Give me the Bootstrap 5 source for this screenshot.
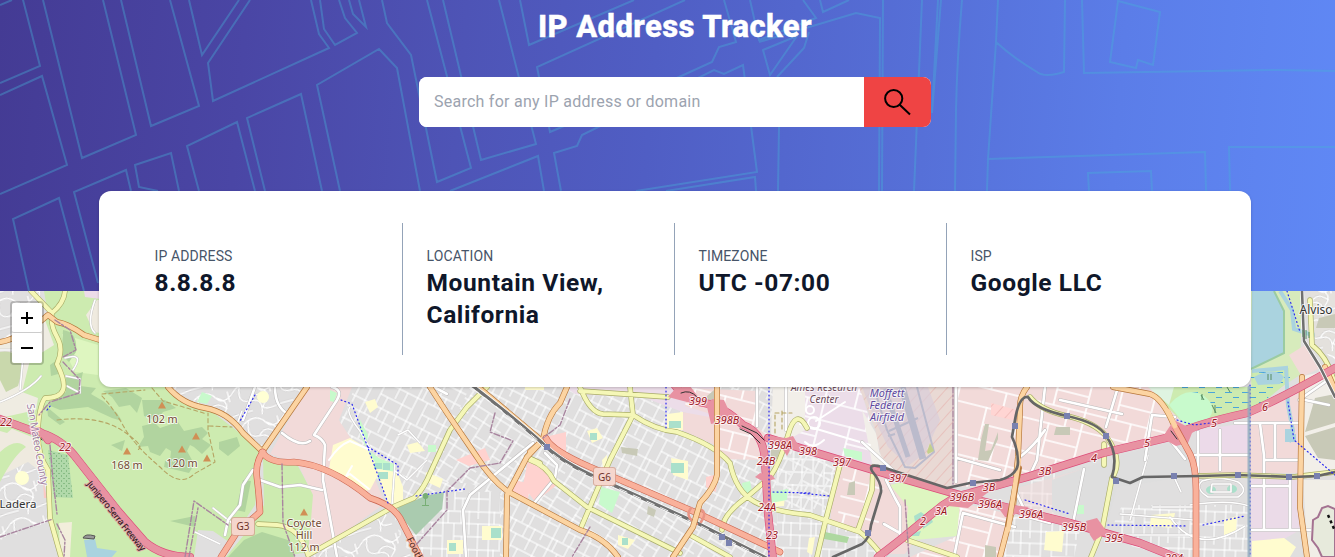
<!DOCTYPE html>
<html lang="en">
<head>
<meta charset="utf-8">
<meta name="viewport" content="width=device-width, initial-scale=1">
<title>IP Address Tracker</title>
<link rel="stylesheet" href="https://cdn.jsdelivr.net/npm/bootstrap@5.3.0/dist/css/bootstrap.min.css">
<style>
html{overflow:hidden}
body{width:1350px;height:557px;overflow:hidden;font-family:Roboto,"Liberation Sans",sans-serif;color:#0f172a}
.hero{height:291px;padding-top:9px;background:linear-gradient(95deg,#443b94 0%,#4a46a5 18%,#4e54b6 34%,#505ec4 48%,#5670d8 68%,#5b7de8 82%,#6089f6 100%)}
.hero-art{inset:0;width:1335px;height:291px}
.hero-art path{fill:none;stroke:#46b0d8;stroke-opacity:.38;stroke-width:2}
.hero h1{font-size:31px;line-height:36px;font-weight:800;letter-spacing:.42px;margin:0 0 32px;-webkit-text-stroke:.4px #fff}
.search-box{width:512px;height:50px;border-radius:8px}
.search-box input{border:0;border-radius:8px 0 0 8px;padding:0 15px;font-size:16px;letter-spacing:.25px;color:#111827}
.search-box input::placeholder{color:#9ca3af;opacity:1}
.search-box button{width:67px;border:0;border-radius:0 8px 8px 0;background:#ef4444;color:#000;padding:0 2px 1px 0}
.info-panel{z-index:5;width:1152px;height:196px;margin-top:-100px;padding:32px;border-radius:12px;box-shadow:0 1px 3px #0003}
.info-item{width:272px;padding:24px 24px 24px 23.5px;border-right:1px solid #94a3b8}
.info-item:last-child{border:0}
.info-label{font-size:14px;line-height:20px;color:#475569;letter-spacing:.12px;margin-top:-1px;margin-bottom:1px}
.info-value{font-size:24.5px;line-height:32px;font-weight:700;letter-spacing:.6px}
.map-pane{height:266px;margin-top:-96px;width:1335px}
.map-zoom{left:10px;top:10px;width:34px;height:64px;border:2px solid #0003;border-radius:4px;background-clip:padding-box;z-index:3}
.map-zoom button{height:30px;border:0;background:#fff;padding:0;border-radius:2px;line-height:0}
.map-zoom button:first-child{border-bottom:1px solid #ccc}
.ln path{fill:none;stroke-linecap:round;stroke-linejoin:round}
.case-y{stroke:#a9ad68;stroke-width:5.4}.fill-y{stroke:#f5f7b7;stroke-width:4.1}
.case-o{stroke:#b6763a;stroke-width:5.9}.fill-o{stroke:#fcd4a2;stroke-width:4.6}
.case-s{stroke:#cb6650;stroke-width:6.6}.fill-s{stroke:#f9b19b;stroke-width:5.4}
.case-m{stroke:#dc4b78;stroke-width:8.2}.fill-m{stroke:#e892a2;stroke-width:7}
.case-w{stroke:#bdbbbb;stroke-width:3.6}.fill-w{stroke:#fff;stroke-width:2.6}
.case-t{stroke:#c4c2c2;stroke-width:2.4}.fill-t{stroke:#fff;stroke-width:1.6}
.map-text{font-family:"Noto Sans","DejaVu Sans",sans-serif;font-size:10.8px;text-anchor:middle;paint-order:stroke;stroke:#fff;stroke-width:2px;stroke-opacity:.75;stroke-linejoin:round}
.exits{font-style:italic;fill:#9c1522}
</style>
</head>
<body>
<header class="hero position-relative">
  <svg class="hero-art position-absolute" viewBox="0 0 1335 291" aria-hidden="true">
    <path d="M0 5L12 0M22-4L40 66L0 83M0 95L42 76L67 165L0 194M43 0L82 158L136 135L103 0M121 0L151 126L199 106L170 0M189 0L202 55L239 0M250 0L208 63L213 101L329 48L319 34L311 0M320 0L324 29L335 45L357 33L345 18L339 0M349 0L353 14L366 27L359 0M382 0L387 23L411 55L437 182L471 168L427 0M443 0L481 160L536 144L499 0M520 0L529 45L634 0M685 0L537 67L550 132L679 77L712 62L719 47L736 42L724 0M561 191L554 153L577 146L582 135L714 70L724 74L743 65L757 172L636 191M450 191L538 156L544 191M666 191L755 177L756 191M750 0L759 40L816 18L803 0M820 0L823 12L849 0M763 50L770 75L797 36ZM777 77L804 48L809 32M759 42L856 13L880 18L879 191M883 0L882 191M779 127L778 191M922 0L914 191M938 0L932 113L941 0M962 0Q957 60 956 110L955 191M998 0L996 42L988 159L987 191M996 42Q1012 57 1037 72Q1045 78 1064 72L1065 0M1082 0L1084 73L1277 70L1335 71M1118 1L1160 12L1153 65L1138 60L1136 68L1110 62ZM988 159L1205 152L1206 191M1089 191L1088 173L1151 171L1152 191M1230 191L1229 147H1335M29 291L13 219L59 198L84 291M98 283L74 192L126 170L131 191M158 191L139 187L135 165L171 153L179 191M199 191L187 146L237 122L255 191M265 191L247 118L301 94L322 191M340 191L317 85L379 49L397 68L420 191"/>
  </svg>
  <h1 class="position-relative text-center text-white">IP Address Tracker</h1>
  <form class="search-box position-relative d-flex mx-auto bg-white" onsubmit="return false">
    <input class="flex-grow-1" type="text" placeholder="Search for any IP address or domain" aria-label="IP address or domain">
    <button class="d-flex align-items-center justify-content-center" type="submit" aria-label="Search">
      <svg width="30" height="30" viewBox="0 0 30 30" fill="none" stroke="currentColor" stroke-width="2"><circle cx="11.7" cy="11.5" r="8.6"/><path d="M17.7 17.7L28 27.5"/></svg>
    </button>
  </form>
</header>

<section class="info-panel position-relative d-flex mx-auto bg-white">
  <div class="info-item"><div class="info-label">IP ADDRESS</div><div class="info-value">8.8.8.8</div></div>
  <div class="info-item"><div class="info-label">LOCATION</div><div class="info-value">Mountain View, California</div></div>
  <div class="info-item"><div class="info-label">TIMEZONE</div><div class="info-value">UTC -07:00</div></div>
  <div class="info-item"><div class="info-label">ISP</div><div class="info-value">Google LLC</div></div>
</section>

<main class="map-pane position-relative overflow-hidden">
  <div class="map-zoom position-absolute d-flex flex-column">
    <button type="button" aria-label="Zoom in"><svg width="14" height="14" viewBox="0 0 14 14" stroke="#000" stroke-width="2"><path d="M7 1V13M1 7H13"/></svg></button>
    <button type="button" aria-label="Zoom out"><svg width="14" height="14" viewBox="0 0 14 14" stroke="#000" stroke-width="2"><path d="M1 7H13"/></svg></button>
  </div>
  <svg class="d-block" width="1335" height="266" viewBox="0 291 1335 266">
    <defs>
      <pattern id="gridA" width="46" height="38" patternUnits="userSpaceOnUse" patternTransform="rotate(27)">
        <path d="M0 1H46M1 0V38M0 13H27M27 0V24M12 13V38M12 26H46M36 13V38M27 13H46M20 26V38M6 0V13M19 0V13M36 1V8" fill="none" stroke="#c9c7c7" stroke-width="2.2"/>
        <path d="M0 1H46M1 0V38M0 13H27M27 0V24M12 13V38M12 26H46M36 13V38M27 13H46M20 26V38M6 0V13M19 0V13M36 1V8" fill="none" stroke="#fff" stroke-width="1.5"/>
      </pattern>
      <pattern id="gridB" href="#gridA" patternTransform="rotate(-58)"/>
      <pattern id="gridC" href="#gridA" patternTransform="rotate(2)"/>
      <pattern id="gridD" width="64" height="52" patternUnits="userSpaceOnUse" patternTransform="rotate(14)"><path d="M0 1H64M1 0V52M32 0V34M0 34H64M48 34V52M32 18H64" fill="none" stroke="#fff" stroke-width="1.7"/></pattern>
      <pattern id="loops" width="42" height="36" patternUnits="userSpaceOnUse" patternTransform="rotate(-15)"><path d="M0 5Q14-3 21 8T42 5M5 3Q-2 20 12 20T20 36M21 8Q36 16 26 25T42 30M12 20Q20 10 30 22M0 30H12M34 5V16" fill="none" stroke="#c9c7c7" stroke-width="2.3"/><path d="M0 5Q14-3 21 8T42 5M5 3Q-2 20 12 20T20 36M21 8Q36 16 26 25T42 30M12 20Q20 10 30 22M0 30H12M34 5V16" fill="none" stroke="#fff" stroke-width="1.6"/></pattern>
      <pattern id="marsh" width="17" height="10" patternUnits="userSpaceOnUse"><path d="M1 2.500H8M9 7.500H15" stroke="#4aa5da" stroke-width="1.1"/></pattern>
      <pattern id="hatch" width="9" height="9" patternUnits="userSpaceOnUse" patternTransform="rotate(42)"><path d="M0 0V9" stroke="#e6aaa6" stroke-width="1"/></pattern>
      <pattern id="dots" width="5" height="5" patternUnits="userSpaceOnUse"><path d="M1 1h1M3.500 3.500h1" stroke="#5e9f60"/></pattern>
      <path id="peak" d="M0-3.500L4 3.500H-4Z" fill="#d08f55"/>
      <rect id="stop" x="-3" y="-3" width="6" height="6" fill="#7981b0"/>
    </defs>
    <rect y="291" width="1335" height="266" fill="#e0dfdf"/>

    <!-- hills and open space -->
    <path d="M0 291H100L180 387L262 450L255 505L220 557H0Z" fill="#cdebb0"/>
    <path d="M0 291H44L48 315L20 340L0 345Z" fill="#e0dfdf"/>
    <path d="M0 291H44L48 315L20 340L0 345Z" fill="url(#loops)"/>
    <path d="M0 344L20 338L45 320L54 345L30 360L22 392L38 398L36 410L0 418Z" fill="#efece2"/>
    <path d="M0 352Q18 349 23 368L18 386L6 392L0 380Z" fill="#c9d8ac"/>
    <path d="M0 424L32 437L44 470L20 482L0 475Z" fill="#efeadf"/>
    <path d="M0 476L28 462L46 476L50 521L60 557H0Z" fill="#e0dfdf"/>
    <path d="M0 476L28 462L46 476L50 521L20 533L0 540Z" fill="url(#loops)"/>
    <path d="M0 452Q16 437 26 447Q14 455 0 482ZM0 416L22 420L7 433L0 431Z" fill="#cdebb0"/>
    <path d="M62 334L98 345V375L75 372L65 352Z" fill="#def6c0"/>
    <path d="M63 330Q78 332 76 352L69 362L62 355ZM50 365L57 360L58 374L51 376ZM66 378L83 372L80 386L96 388L91 394L103 401L117 413L122 421L112 418L88 407L60 410L48 405L58 397L66 392ZM103 391L126 388L142 398L137 413L130 405L119 407L112 397ZM142 426L155 423L160 428L178 422L184 431L202 427L208 433L202 439L211 445L202 454L194 447L190 445L187 451L192 460L188 466L170 461L171 451L166 448L160 456L150 452L148 446L138 447L144 437ZM111 445L125 440L122 451ZM165 461L194 465L189 473L164 467ZM219 442L237 437L240 446L228 456L219 449ZM170 521L195 516V527ZM47 407L65 422L60 425L48 416ZM142 400L165 400L176 408L163 412L156 421L144 416ZM243 480L251 481L245 512L236 510Z" fill="#b1d49f"/>
    <path d="M48 450L68 455L73 498L54 497Z" fill="#b1d9aa"/><path d="M48 450L68 455L73 498L54 497Z" fill="url(#dots)"/>
    <path d="M84 291H100V299L85 297Z" fill="#eddce9"/>
    <path d="M97 300L86 315L94 332L100 333V300Z" fill="#efeadf"/>
    <path d="M59 523L72 522L70 557H60Z" fill="#f2eedb"/>
    <path d="M84 540L95 539L97 548L117 551L112 557H87Z" fill="#aad3df"/><path d="M83 538Q85 533 95 536L94 539Z" fill="#999" stroke="#555"/>
    <path d="M194 557L198 530L213 531L232 544L224 557Z" fill="#e0dfdf"/>
    <circle cx="22" cy="478" r="7" fill="#ffffd4"/><path d="M43 480L47 498H44Z" fill="#fbc9c4"/>
    <path d="M168 387H306L266 450L216 413L190 402Z" fill="#e0dfdf"/><path d="M168 387H306L266 450L216 413L190 402Z" fill="url(#loops)"/>
    <path d="M202 392L212 396L207 404L197 402Z" fill="#c8facc"/><circle cx="263" cy="397" r="6" fill="#ffffd4"/>
    <path d="M263 457L283 462L298 466L308 485L316 497L312 524L308 552L280 557H226L248 530L264 505Z" fill="#cdebb0"/>
    <path d="M262 532L288 540L295 557H228L244 540Z" fill="#b1d49f"/>

    <!-- neighbourhoods -->
    <path d="M307 387H352L339 420L371 470L385 503L340 536L308 557L313 495L298 464L270 454Z" fill="#f2dad9"/>
    <path d="M355 387H840V557H405L393 510L370 466L340 422Z" fill="url(#gridA)"/>
    <path d="M470 387L540 440L600 475L760 557H620L500 486L425 480Z" fill="#e0dfdf"/><path d="M470 387L540 440L600 475L760 557H620L500 486L425 480Z" fill="url(#gridB)"/>
    <path d="M425 492H500V557H405L397 508Z" fill="#e0dfdf"/><path d="M425 492H500V557H405L397 508Z" fill="url(#gridC)"/>
    <path d="M308 553L385 512L412 557H310Z" fill="#e0dfdf"/><path d="M308 553L385 512L412 557H310Z" fill="url(#loops)"/>
    <path d="M565 387H720L710 420L680 411L645 398L575 394Z" fill="#ecdde9"/>
    <path d="M688 388L757 391V426L768 437L764 460L720 459L717 416L685 406Z" fill="#f2dad9"/><path d="M688 388L757 391V426L768 437L764 460L720 459L717 416L685 406Z" fill="url(#gridD)"/>
    <path d="M682 412L715 418V445L677 428Z" fill="#f2dad9"/>
    <path d="M528 460L545 468L558 484L535 502L523 485ZM515 480L530 484L528 500L507 492ZM456 460L485 448L490 460L469 466ZM545 437L566 432V455ZM706 477L718 474L716 492L706 487Z" fill="#ffd2cf"/>
    <path d="M773 387H860L880 455L872 466L775 439Z" fill="#ecdde9"/><path d="M773 387H860L880 455L872 466L775 439Z" fill="url(#gridD)"/>
    <path d="M773 387H805V430L780 445L771 434Z" fill="#f2efe9"/>
    <path d="M862 410L877 435L879 452L897 474L872 463Z" fill="#f2efe9"/>
    <path d="M859 387H956L952 490L899 475L881 456L875 429Z" fill="#e9d9d4"/><path d="M859 387H955L952 490L899 475L881 456L875 429Z" fill="url(#hatch)"/>
    <path d="M862 387H928L940 420L925 453L908 466L888 447L875 420Z" fill="#d8cdda" opacity=".7"/>
    <path d="M836 457L886 476L876 535L830 523ZM876 482L950 491L905 554H860L872 510Z" fill="#f2dad9"/>
    <path d="M845 462L885 477L877 535L837 522Z" fill="url(#gridD)"/><path d="M775 445L838 461L824 523L776 508Z" fill="url(#gridC)"/>
    <path d="M778 510L822 523L815 557H774ZM824 525L868 536L880 557H817Z" fill="#e0dfdf"/><path d="M778 510L868 536L880 557H774Z" fill="url(#gridC)"/>
    <path d="M903 482L971 499L957 536L905 541L908 507L890 485Z" fill="#def6c0"/>
    <path d="M957 387H1190L1170 439L1070 464L985 486L954 487Z" fill="#f2dad9"/><path d="M957 387H1190L1170 439L1070 464L985 486L954 487Z" fill="url(#gridD)"/>
    <path d="M960 503L1010 514L998 557H910L957 536Z" fill="#f2dad9"/><path d="M960 503L1010 514L998 557H910L957 536Z" fill="url(#gridD)"/>
    <path d="M1012 512L1080 530L1074 557H1000Z" fill="#e0dfdf"/><path d="M1019 485L1064 470L1055 517L1019 508ZM1012 512L1080 530L1074 557H1000Z" fill="url(#gridC)"/>
    <path d="M1020 487L1110 461L1105 530L1018 508Z" fill="#f2dad9" opacity=".5"/>
    <path d="M1052 480L1122 455L1180 440L1193 462V475L1117 488L1105 530L1052 512Z" fill="#dedede"/>
    <path d="M1120 486H1248V557H1108Z" fill="#e0dfdf"/><path d="M1122 505H1248V557H1170L1107 539Z" fill="url(#gridC)"/>
    <path d="M1196 430L1248 423V472H1198Z" fill="#ecdae9"/><path d="M1198 455H1248V473H1198Z" fill="#f2dad9"/>
    <path d="M1250 410L1300 391V473H1250Z" fill="#f2dad9"/>
    <path d="M1250 478H1300V530L1252 557Z" fill="#ebdbe8"/>
    <path d="M1303 376L1335 369V474H1303Z" fill="#f2efe9"/>
    <path d="M1303 480H1335V557H1308Z" fill="#f1eee7"/>
    <path d="M1315 398L1335 394V423L1305 432ZM1305 436L1335 427V460L1318 458Z" fill="#c8c9b7"/>
    <path d="M1251 291H1302L1300 375L1251 407Z" fill="#d7ebbc"/>
    <path d="M1252 291H1274L1284 311V353L1251 369Z" fill="#aad3df"/>
    <path d="M1274 291L1284 311V353L1251 369" fill="none" stroke="#9bcba1" stroke-width="2"/>
    <path d="M1150 387L1252 387V370L1289 368V381L1253 411L1200 427H1188L1168 408Z" fill="#cdebb0"/>
    <path d="M1162 387H1251V371L1290 369V382L1252 409L1208 411L1195 395Z" fill="url(#marsh)"/>
    <path d="M1169 405Q1185 386 1203 395Q1223 410 1201 425H1185Z" fill="#c8facc"/>
    <path d="M1148 387H1174L1169 405Z" fill="#dff4e1"/>
    <path d="M1254 377Q1275 366 1284 377L1280 384L1258 385Z" fill="#aad3df"/>
    <path d="M1280 291L1292 310L1294 329L1312 335L1335 332M1252 371L1286 368L1288 405L1293 431L1289 442" fill="none" stroke="#aad3df" stroke-width="4"/>
    <path d="M1289 355L1305 345L1320 368L1302 377Z" fill="#f2dad9"/><path d="M1310 291H1335V360L1316 347Z" fill="#e4e1dd"/><path d="M1310 291H1335V360L1316 347Z" fill="url(#loops)"/>
    <path d="M1319 318L1335 314V328H1316Z" fill="#c8c9b7"/>

    <!-- parks and schools -->
    <path d="M333 445L350 438L367 448L378 475L370 490L358 492L329 469ZM369 452L395 466L403 487V504L388 503ZM365 402L375 399L378 407L370 413ZM407 445L418 442L425 451L410 453ZM426 472L443 479L440 488L425 481ZM482 526H502V540H482ZM447 540H463V554H447ZM587 431L597 428L603 438L592 443ZM671 458L688 461V480L673 475ZM667 414L683 412V430H667ZM618 535L635 540L628 549L618 545ZM525 382H544V390H525ZM1151 515L1175 513L1172 528L1150 526ZM1224 520L1237 516L1236 533L1224 535ZM1252 541L1284 538L1296 547L1290 557H1252ZM1046 532L1064 531L1062 552L1044 550ZM770 498L785 496L784 506L771 507ZM809 538L815 537L812 555L807 552ZM602 460L607 455L608 468L603 468Z" fill="#fffccf"/>
    <path d="M397 508L425 496L444 492L442 509L416 535L404 520Z" fill="#aacbaf"/>
    <path d="M359 418L368 435L366 447L360 435ZM367 449L379 458L396 465V472L379 469ZM330 390L337 393L334 402L330 401ZM601 487L620 492L612 513L599 504ZM742 483L750 481L753 496L743 492ZM770 492L788 489L787 500L771 503ZM428 445H436V452H428ZM843 448L862 452V461L845 456ZM1075 505H1084V514H1075Z" fill="#c8facc"/>
    <path d="M825 532L849 537L847 543L824 539Z" fill="#aed8a0"/>
    <path d="M374 463h8v6h-8ZM383 463h7v7h-7ZM378 472h10v7h-10ZM671 463h13v10h-13ZM669 421h12v7h-12ZM590 433h7v7h-7ZM491 528h10v10h-10ZM449 543h7v8h-7ZM622 538h6v7h-6ZM914 516l7-4 4 3-10 7ZM912 533l9-2-2 5h-7ZM923 522l8-4 2 4-10 7ZM1206 490a5 4 0 1 0 10 0a5 4 0 1 0-10 0M1227 489a5 4 0 1 0 10 0a5 4 0 1 0-10 0" fill="#aae0cb"/>
    <path d="M981 440L985 424H989L985 451L991 450L998 432V439L988 461L978 460ZM849 483L855 481V495H847ZM707 396L714 390V402L708 405ZM1056 427H1070V435H1054ZM985 545L996 547V557H985ZM771 449L780 450L777 459L771 458ZM621 447L638 449L637 456L622 453ZM648 506L656 510L654 517L647 514Z" fill="#c8c9b7"/>
    <path d="M991 403L1017 410V421L991 415Z" fill="#ffd5d3"/><path d="M991 403L1017 410V421L991 415Z" fill="url(#hatch)"/>
    <path d="M1285 429h7v5h4v8h-11Z" fill="#aad3df"/>
    <path d="M1313 520L1318 517L1322 508L1328 506L1335 509V557H1322L1318 548L1312 540Z" fill="#e7eadc" stroke="#a47291" stroke-width="2"/>
    <path d="M1328 515L1335 531" stroke="#111" stroke-width="2.500" stroke-dasharray="3 3"/>

    <!-- runways -->
    <g fill="none" stroke="#bbbbcc"><path d="M885 389L908 457" stroke-width="5"/><path d="M902 387L923 459" stroke-width="7"/><path d="M875 391L887 430L905 467L915 468L934 452L917 387M888 436L895 434M889 431L918 418" stroke-width="2"/></g>
    <path d="M927 452L930 443L934 451L928 454Z" fill="#c3d08c"/>

    <g class="ln">
      <path class="case-t" d="M0 402Q30 390 41 376M24 346L20 390M0 350H26M95 300Q86 325 95 333M65 358Q85 352 73 370M66 376L80 379V393L67 386M195 532L220 544M213 508L232 523M242 411L237 424M395 463L392 505M350 407Q345 412 360 431L371 450M427 460L407 480L395 471M420 443L408 430L398 435M1190 505Q1230 499 1249 506M1202 481Q1219 475 1238 482Q1249 490 1238 497H1208Q1194 488 1202 481M1212 484H1231V492H1211ZM1170 517Q1197 557 1245 526M1152 507H1198M1120 514L1193 520M1193 535H1115M1148 455L1130 520M1174 477L1181 492"/><path class="fill-t" d="M0 402Q30 390 41 376M24 346L20 390M0 350H26M95 300Q86 325 95 333M65 358Q85 352 73 370M66 376L80 379V393L67 386M195 532L220 544M213 508L232 523M242 411L237 424M395 463L392 505M350 407Q345 412 360 431L371 450M427 460L407 480L395 471M420 443L408 430L398 435M1190 505Q1230 499 1249 506M1202 481Q1219 475 1238 482Q1249 490 1238 497H1208Q1194 488 1202 481M1212 484H1231V492H1211ZM1170 517Q1197 557 1245 526M1152 507H1198M1120 514L1193 520M1193 535H1115M1148 455L1130 520M1174 477L1181 492"/>
      <path d="M808 423a6 6 0 1 0 12 0a6 6 0 1 0-12 0M806 410a4 4 0 1 0 8 0a4 4 0 1 0-8 0M816 421L845 402M800 424L870 445M805 442Q813 450 824 440" stroke="#fff" stroke-width="2"/>
      <path class="case-w" d="M332 387Q343 390 337 400L314 435Q322 438 325 445L323 480L337 557M275 387Q275 407 288 414M282 433Q300 448 310 441M260 480L280 487L300 485L322 490M253 470L243 485L240 505L228 520L225 535M255 387L243 420M434 387L447 394M533 443L470 495L463 510L466 557M545 453L557 465L555 478L535 502M757 387V426M786 387V430M956 387V482M862 442L895 472M886 480L895 498L900 507V539L884 557M884 524L905 536M957 458L1000 470M1020 457Q1035 445 1045 430M1045 387L1037 460L1030 475M963 513L1015 527M963 513L954 557M1015 490L1028 517L1050 523M1118 387L1106 427M1060 400L1122 414M1084 469L1073 523M1145 460L1152 415L1175 417M1170 440L1185 459M1235 423H1298M1260 424L1264 455V530H1298M1290 476V530M1252 486H1290M1265 460H1298M1275 424V460M1195 455H1248M1220 430V470M1198 432V472M1299 400L1335 375M1252 530H1310M1329 405L1305 400"/>
      <path class="fill-w" d="M332 387Q343 390 337 400L314 435Q322 438 325 445L323 480L337 557M275 387Q275 407 288 414M282 433Q300 448 310 441M260 480L280 487L300 485L322 490M253 470L243 485L240 505L228 520L225 535M255 387L243 420M434 387L447 394M533 443L470 495L463 510L466 557M545 453L557 465L555 478L535 502M757 387V426M786 387V430M956 387V482M862 442L895 472M886 480L895 498L900 507V539L884 557M884 524L905 536M957 458L1000 470M1020 457Q1035 445 1045 430M1045 387L1037 460L1030 475M963 513L1015 527M963 513L954 557M1015 490L1028 517L1050 523M1118 387L1106 427M1060 400L1122 414M1084 469L1073 523M1145 460L1152 415L1175 417M1170 440L1185 459M1235 423H1298M1260 424L1264 455V530H1298M1290 476V530M1252 486H1290M1265 460H1298M1275 424V460M1195 455H1248M1220 430V470M1198 432V472M1299 400L1335 375M1252 530H1310M1329 405L1305 400"/>
      <path d="M329 460Q339 445 350 441L370 450M329 469L343 478L350 474L369 489M345 478L352 466" stroke="#fff" stroke-width="2"/>
      <!-- tertiary and secondary roads -->
      <path class="case-y" d="M31 291L52 313Q50 325 57 337T57 364Q66 382 63 390T45 398Q39 406 38 430T48 470L50 518L61 557M65 291Q64 303 52 313M258 524L277 525Q300 527 308 555L340 537L393 507L414 498Q421 492 427 480L450 430L467 407L487 387M580 387Q590 413 603 414L633 415Q655 430 677 432Q715 445 730 463Q736 492 755 502T810 515L860 532Q870 540 880 553M580 391L668 397M630 387L633 415L610 460L580 530M530 460Q547 466 554 481L587 507L680 553M722 530Q722 515 747 497L770 477Q780 463 788 435T807 428M690 535L730 557M840 465L825 523L817 557M873 467L872 490L858 530M907 540L957 557M1030 397Q1040 410 1067 416T1106 436Q1124 460 1112 478L1102 530L1091 557M1196 476L1237 475L1293 477L1335 472M1104 444V465M1310 300L1312 345Q1330 359 1335 387M527 457L540 463"/>
      <path class="fill-y" d="M31 291L52 313Q50 325 57 337T57 364Q66 382 63 390T45 398Q39 406 38 430T48 470L50 518L61 557M65 291Q64 303 52 313M258 524L277 525Q300 527 308 555L340 537L393 507L414 498Q421 492 427 480L450 430L467 407L487 387M580 387Q590 413 603 414L633 415Q655 430 677 432Q715 445 730 463Q736 492 755 502T810 515L860 532Q870 540 880 553M580 391L668 397M630 387L633 415L610 460L580 530M530 460Q547 466 554 481L587 507L680 553M722 530Q722 515 747 497L770 477Q780 463 788 435T807 428M690 535L730 557M840 465L825 523L817 557M873 467L872 490L858 530M907 540L957 557M1030 397Q1040 410 1067 416T1106 436Q1124 460 1112 478L1102 530L1091 557M1196 476L1237 475L1293 477L1335 472M1104 444V465M1310 300L1312 345Q1330 359 1335 387M527 457L540 463"/>
      <path class="case-o" d="M0 342Q20 339 48 315L57 322Q69 324 84 335L100 340M168 387Q182 404 205 408T243 433L263 452M262 452L307 387M430 387L447 413L477 457Q490 478 507 491L580 530Q605 538 618 557M543 440L527 457L507 495L506 557M478 387L541 440M530 452L543 440Q547 416 560 403L567 387M1027 387Q1019 397 1020 410L1018 457L1013 507L1000 557M1113 387L1150 394Q1162 398 1173 423M1302 377L1300 507L1307 557M1325 367L1335 390"/>
      <path class="fill-o" d="M0 342Q20 339 48 315L57 322Q69 324 84 335L100 340M168 387Q182 404 205 408T243 433L263 452M262 452L307 387M430 387L447 413L477 457Q490 478 507 491L580 530Q605 538 618 557M543 440L527 457L507 495L506 557M478 387L541 440M530 452L543 440Q547 416 560 403L567 387M1027 387Q1019 397 1020 410L1018 457L1013 507L1000 557M1113 387L1150 394Q1162 398 1173 423M1302 377L1300 507L1307 557M1325 367L1335 390"/>
      <path class="case-s" d="M263 452Q255 463 257 478T260 512Q248 523 239 529L221 557M262 452Q270 464 294 462Q330 465 370 498Q392 505 400 518L420 557M546 438Q551 450 590 467L697 513L780 552"/>
      <path class="fill-s" d="M263 452Q255 463 257 478T260 512Q248 523 239 529L221 557M262 452Q270 464 294 462Q330 465 370 498Q392 505 400 518L420 557M546 438Q551 450 590 467L697 513L780 552"/>
      <path d="M470 384Q512 416 540 441Q560 462 600 479L697 523L770 560" stroke="#fff" stroke-width="4.800"/><path d="M470 384Q512 416 540 441Q560 462 600 479L697 523L770 560" stroke="#717171" stroke-width="3.400"/><path d="M472 388Q512 418 540 442Q560 464 600 480L697 524L770 561" stroke="#f5f5f5" stroke-width="1" stroke-dasharray="8 7"/>
      <path d="M697 509Q709 510 701 522M697 524Q684 517 691 508" stroke="#e99485" stroke-width="2.500"/>
      <path class="case-m" d="M0 419L33 431Q58 436 74 455L118 511L145 542Q163 557 190 557M37 431Q42 431 48 440M673 383Q685 400 704 403T743 425Q763 432 765 460L768 513L773 560M768 438L800 448L890 475L977 500L1070 523L1140 543L1180 559M878 557L900 540L933 513Q952 496 970 493L1027 477L1103 453L1170 437Q1192 425 1247 413Q1278 400 1335 368"/>
      <path class="fill-m" d="M0 419L33 431Q58 436 74 455L118 511L145 542Q163 557 190 557M37 431Q42 431 48 440M673 383Q685 400 704 403T743 425Q763 432 765 460L768 513L773 560M768 438L800 448L890 475L977 500L1070 523L1140 543L1180 559M878 557L900 540L933 513Q952 496 970 493L1027 477L1103 453L1170 437Q1192 425 1247 413Q1278 400 1335 368"/>
    </g>
    <path d="M668 397L676 388L690 386L702 402L687 402ZM707 407L712 399L724 400L729 411L741 423L720 422L711 424ZM768 436L786 438L793 436L797 443L802 448L790 450L787 456L782 448ZM755 477L760 473L772 475L775 479L764 482ZM948 506L968 508L991 490L964 494ZM995 503L1005 517L1010 517L1029 507ZM1086 521L1097 518L1107 532L1094 541L1090 535ZM1162 438L1174 420L1188 427H1202L1192 433L1188 443L1176 446Z" fill="#e892a2"/>
    <g class="ln">
      <path class="case-o" d="M717 387V475Q715 487 700 503L693 527L673 557M1019 468L1008 525"/><path class="fill-o" d="M717 387V475Q715 487 700 503L693 527L673 557M1019 460L1008 530"/>
      <path class="case-s" d="M1176 428L1190 454Q1196 466 1196 490V557"/><path class="fill-s" d="M1174 425L1190 454Q1196 466 1196 490V557"/><path class="fill-o" d="M1168 411L1175 426"/>
      <path d="M833 557L862 544Q870 538 871 525L881 492Q882 483 872 471Q868 463 882 467L947 488L970 483L1000 480Q1018 475 1018 462Q1018 449 1012 437L1015 420Q1019 396 1028 397Q1035 409 1067 416T1106 436Q1119 453 1112 477L1130 483L1143 477L1200 476L1237 475L1293 477L1317 476L1335 472" stroke="#666" stroke-width="2.700"/>
      <path d="M1302 291L1304 341L1320 367L1335 397" stroke="#fff" stroke-width="4"/><path d="M1302 291L1304 341L1320 367L1335 397" stroke="#707070" stroke-width="2.600"/>
      <g stroke="#2b2bf0" stroke-width="1.2" stroke-dasharray="1 3"><path d="M341 400L352 404L388 503M368 447L398 465V475M416 496L465 489M666 387V429M769 387V557M773 492L810 493M1287 291L1300 332M1288 402L1294 440L1335 475M1108 525L1187 526M1203 525L1245 516M1250 385V557M1177 420L1194 425L1210 423M255 395L240 421M47 410L51 405M1025 500L1070 514M800 493L830 496"/></g>
      <path d="M1249 387V557" stroke="#91aabd" stroke-width="3" opacity=".8"/>
      <g stroke="#b5a463" stroke-width="1.100" stroke-dasharray="4 3"><path d="M102 396Q114 409 124 427T160 467Q180 488 194 474L215 462L208 430L208 413M57 420Q99 415 123 431T137 450M152 388L163 401L207 414M102 394L145 390M209 426L232 427M775 415V433M782 411V430M775 413H792"/></g>
      <g stroke="#a8859f" stroke-width="1.400" stroke-dasharray="6 2 2 2"><path d="M55 320L70 330L76 350L63 357M63 362L80 380L79 393L50 402L39 415M50 445L53 480L57 514M0 537L53 519M57 524L65 540L64 557M185 557L194 501L228 525M189 557L198 508M282 464L283 523L295 557M495 413L490 432L513 441L500 463L470 468L447 491V510L415 546V557M570 399L560 425L543 438M590 527L572 557M905 500L909 557M953 387V484"/></g>
      <path d="M740 429L751 434L760 443M681 393Q690 389 697 397M742 426L757 433L764 440M1171 431L1177 439M36 432L42 440" stroke="#333" stroke-width="1"/>
    </g>
    <g><use href="#peak" x="162" y="405"/><use href="#peak" x="127" y="451"/><use href="#peak" x="182" y="449"/><use href="#peak" x="196" y="436"/><use href="#peak" x="207" y="458"/><use href="#peak" x="304" y="512"/></g>
    <g><use href="#stop" x="547" y="447"/><use href="#stop" x="722" y="537"/><use href="#stop" x="729" y="543"/><use href="#stop" x="883" y="468"/><use href="#stop" x="973" y="483"/><use href="#stop" x="1015" y="426"/><use href="#stop" x="868" y="533"/><use href="#stop" x="1067" y="416"/><use href="#stop" x="1106" y="436"/><use href="#stop" x="1116" y="481"/><use href="#stop" x="1174" y="476"/><use href="#stop" x="1238" y="475"/><use href="#stop" x="1289" y="477"/><use href="#stop" x="1317" y="476"/></g>
    <path d="M1303 330V337M1306 330V339M1309 332V338M1201 395L1204 400M1202 394V400M1212 405L1216 413M1215 405V413M1227 387L1230 392M1268 374V380M1271 374V380" stroke="#578b60"/>
    <path d="M425 499a3 3 0 1 1 1 0v6h3v1h-7v-1h3Z" fill="#78ae75"/>
    <g class="map-text">
      <g class="exits"><text x="6" y="426">22</text><text x="65" y="451">22</text><text x="698" y="405">399</text><text x="727" y="424">398B</text><text x="780" y="449">398A</text><text x="766" y="465">24B</text><text x="767" y="511">24A</text><text x="772" y="539">23</text><text x="808" y="455">398</text><text x="842" y="466">397</text><text x="898" y="482">397</text><text x="962" y="501">396B</text><text x="989" y="491">3B</text><text x="990" y="508">396A</text><text x="941" y="515">3A</text><text x="923" y="525">2</text><text x="1045" y="475">3B</text><text x="1031" y="518">396A</text><text x="1074" y="531">395B</text><text x="1094" y="462">4</text><text x="1147" y="447">5</text><text x="1214" y="427">5</text><text x="1265" y="411">6</text><text x="1114" y="542">395</text><text x="1174" y="562">394</text></g>
      <g fill="#744a35"><text x="162" y="423">102 m</text><text x="127" y="469">168 m</text><text x="182" y="467">120 m</text><text x="304" y="527">Coyote</text><text x="304" y="539">Hill</text><text x="304" y="551">112 m</text></g>
      <g fill="#6d4a5a" font-style="italic" font-size="10"><text x="824" y="391">Ames Research</text><text x="824" y="403">Center</text></g>
      <g fill="#5f4aa0" font-style="italic"><text x="887" y="397">Moffett</text><text x="887" y="409">Federal</text><text x="887" y="421">Airfield</text></g>
      <text x="18" y="508" fill="#333" font-size="11.5">Ladera</text><text x="1316" y="314" fill="#333" font-size="12">Alviso</text>
      <text transform="translate(34 445) rotate(80)" fill="#a27da0" font-size="10.5" textLength="83">San Mateo County</text>
      <text transform="translate(114 518) rotate(51)" fill="#352027" stroke="#e892a2" font-size="9" textLength="87" font-weight="500">Junipero Serra Freeway</text>
      <text transform="translate(414 554) rotate(63)" fill="#49251b" stroke="#f9b19b" font-size="9.5">Foothill</text>
      <rect x="232" y="518" width="22" height="17" rx="2" fill="#f5d6cd" stroke="#d39d8c"/><text x="243" y="530" fill="#70342b" stroke="none" font-size="10">G3</text>
      <rect x="594" y="468" width="21" height="17" rx="2" fill="#f5d6cd" stroke="#d39d8c"/><text x="604.500" y="481" fill="#70342b" stroke="none" font-size="10">G6</text>
    </g>
  </svg>
</main>
<script src="https://cdn.jsdelivr.net/npm/bootstrap@5.3.0/dist/js/bootstrap.bundle.min.js"></script>
</body>
</html>
